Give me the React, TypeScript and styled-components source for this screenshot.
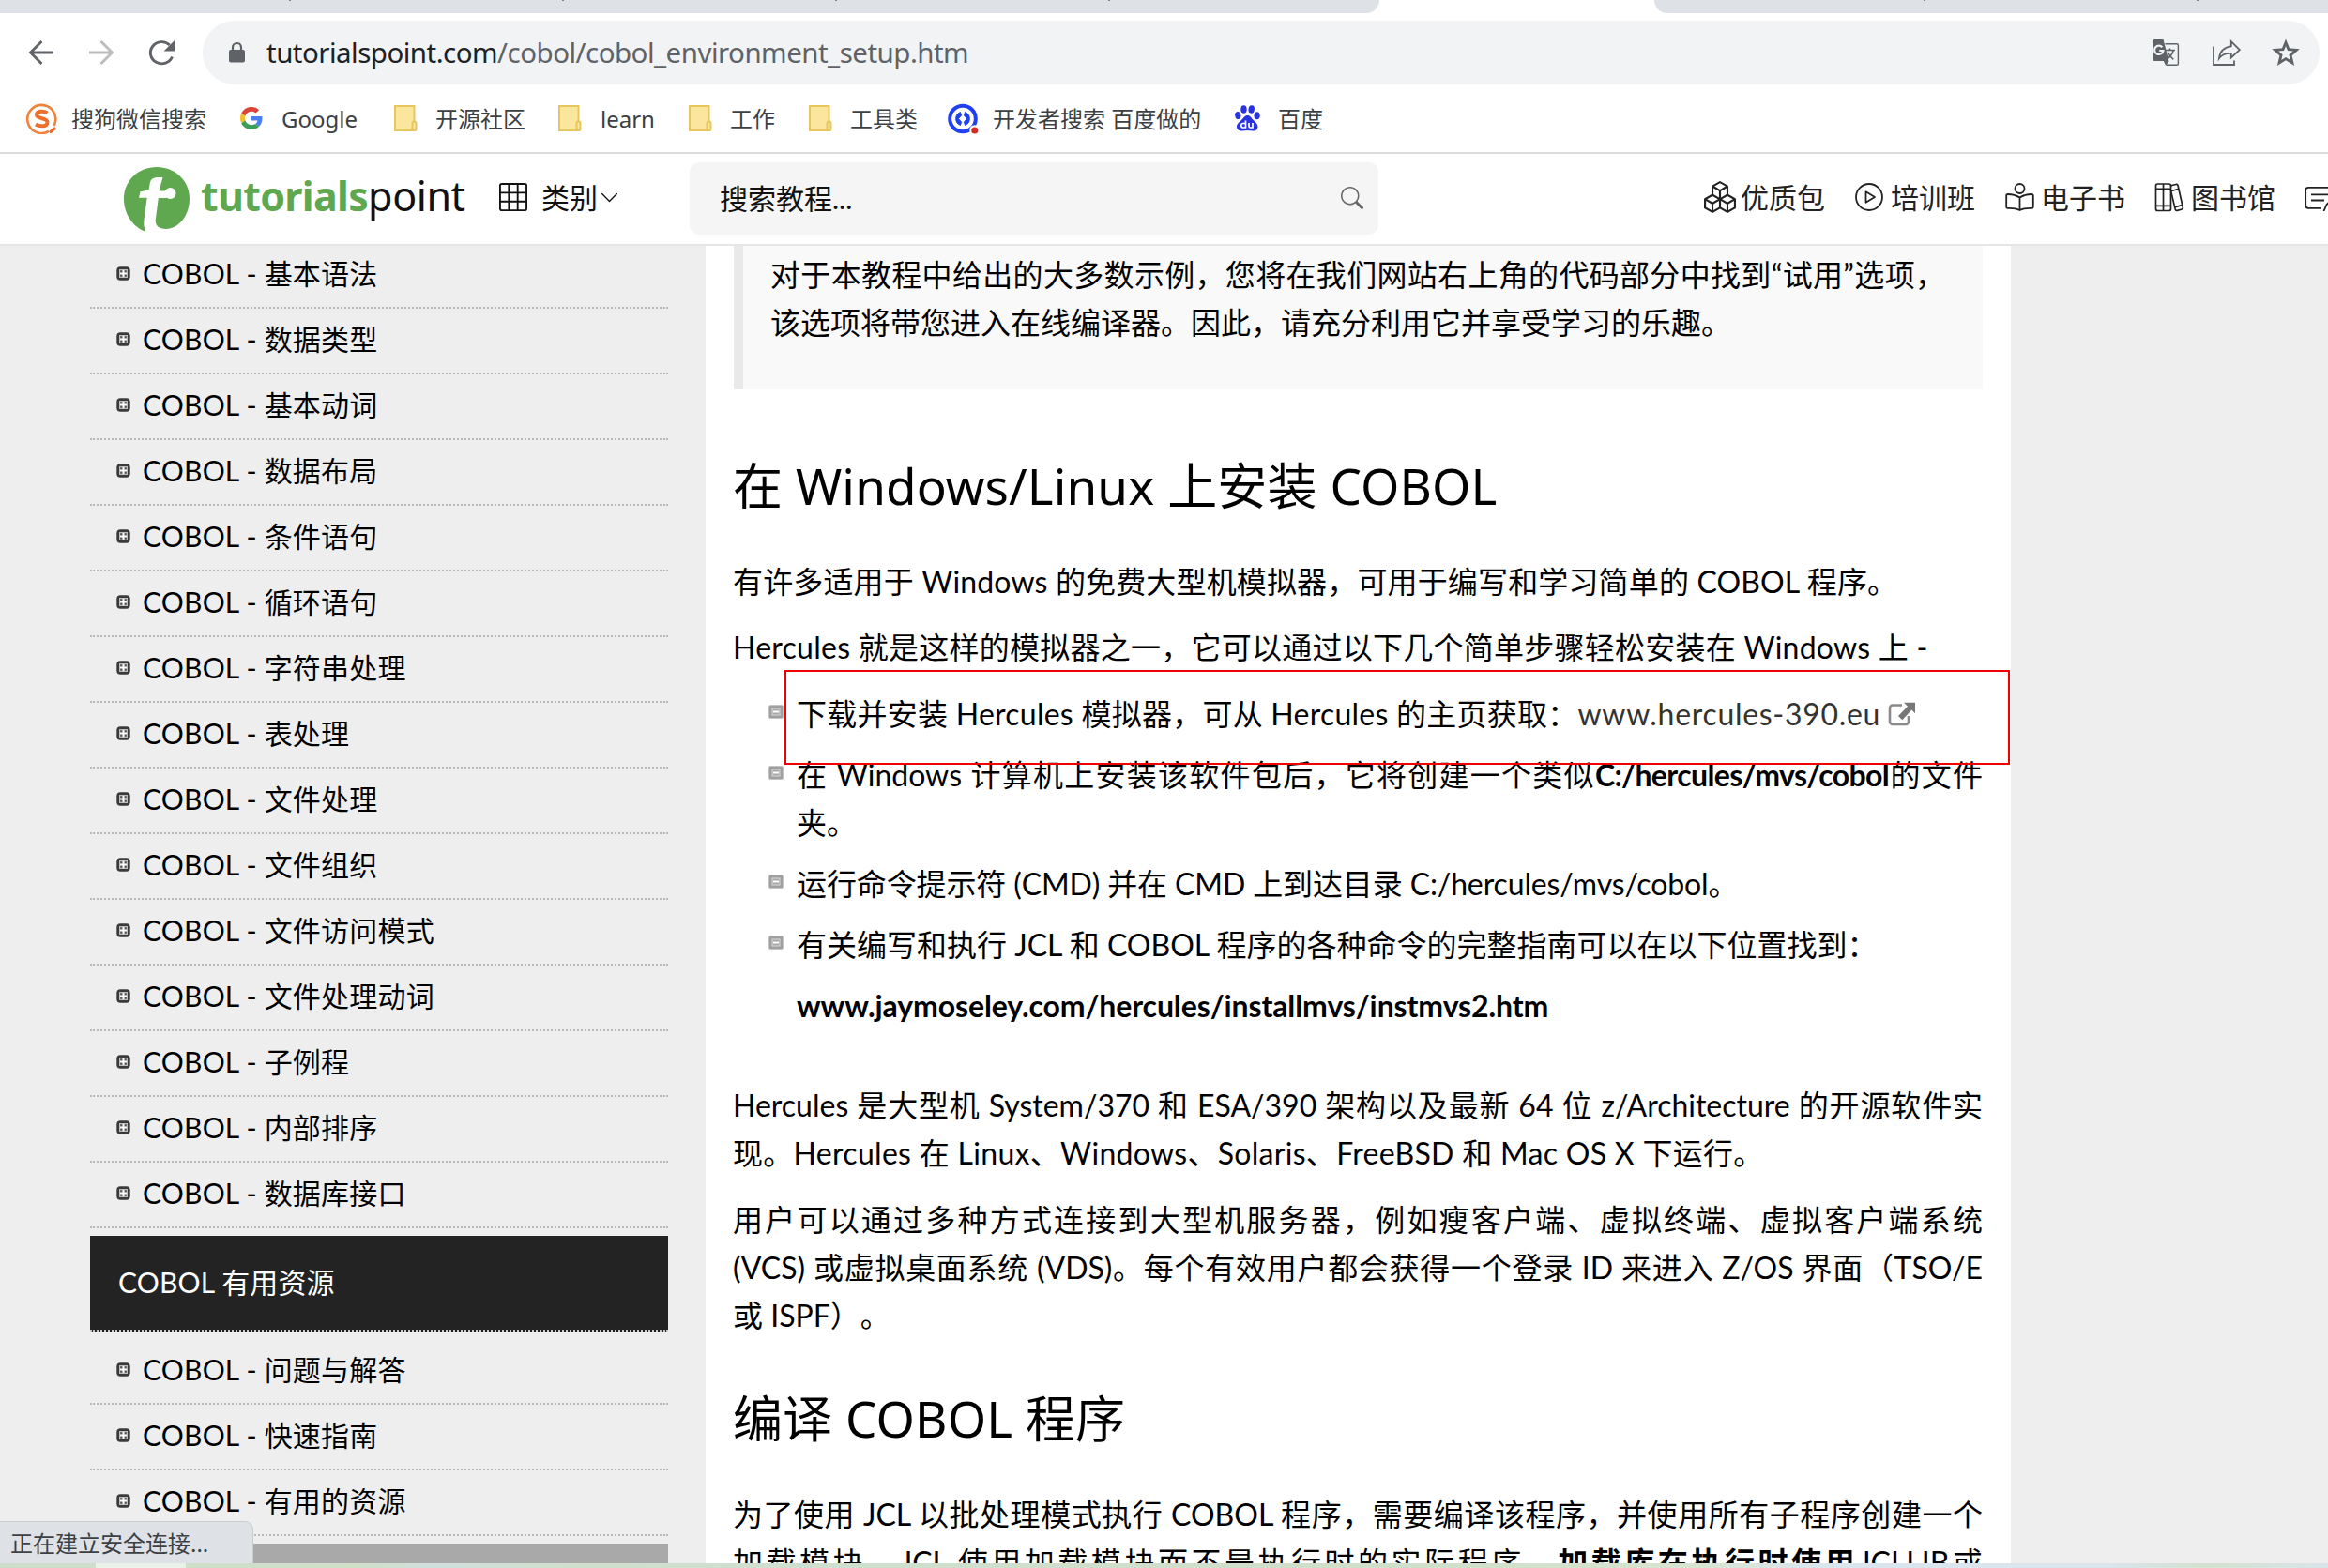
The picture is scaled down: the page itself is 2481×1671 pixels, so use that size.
import React from "react";
import styled, { createGlobalStyle, css } from "styled-components";
import { BsBoxes, BsGrid3X3, BsSearch, BsChevronDown } from "react-icons/bs";

const ui = `"Noto Sans", "Noto Sans CJK SC", sans-serif`;
const body = `Lato, "Noto Sans CJK SC", sans-serif`;

const Global = createGlobalStyle`
  * { box-sizing: border-box; }
  html, body { margin: 0; padding: 0; background: #fff; overflow: hidden; }
  svg { display: block; flex: none; }
`;

const Screen = styled.div`
  position: relative;
  width: 2481px;
  height: 1671px;
  display: flex;
  flex-direction: column;
  overflow: hidden;
  background: #fff;
  font-family: ${body};
  color: #000;
`;

/* ---------- browser chrome ---------- */

const TabStrip = styled.div`
  height: 14px;
  flex: none;
  display: flex;
  justify-content: space-between;
`;

const TabGroup = styled.div<{ $side: "left" | "right" }>`
  width: ${(p) => (p.$side === "left" ? 1470 : 718)}px;
  background: #dee1e6;
  display: flex;
  gap: 289px;
  padding-left: ${(p) => (p.$side === "left" ? 308 : 287)}px;
  ${(p) =>
    p.$side === "left"
      ? css`border-bottom-right-radius: 14px;`
      : css`border-bottom-left-radius: 14px;`}
`;

const TabDivider = styled.i`
  width: 2px;
  height: 1px;
  background: #808488;
`;

const Toolbar = styled.div`
  height: 84px;
  flex: none;
  padding: 8px 9px 8px 28px;
  display: flex;
  align-items: center;
`;

const NavButtons = styled.div`
  width: 188px;
  display: flex;
  gap: 32px;
`;

const Omnibox = styled.div`
  flex: 1;
  height: 68px;
  border-radius: 34px;
  background: #f1f3f4;
  display: flex;
  align-items: center;
  padding: 0 20px 0 26px;
`;

const Url = styled.div`
  margin-left: 21px;
  flex: 1;
  font: 29.5px/40px ${ui};
  letter-spacing: -0.52px;
  color: #5f6368;
  white-space: nowrap;
`;

const UrlHost = styled.span`
  color: #202124;
`;

const OmniActions = styled.div`
  display: flex;
  align-items: center;
  gap: 32px;
`;

const BookmarkBar = styled.div`
  height: 66px;
  flex: none;
  border-bottom: 2px solid #dcdcdd;
  padding: 0 0 8px 28px;
  display: flex;
  align-items: center;
`;

const Bookmark = styled.div<{ $width: number; $gap: number }>`
  width: ${(p) => p.$width}px;
  flex: none;
  display: flex;
  align-items: center;
  gap: ${(p) => p.$gap}px;
  font: 24px/34px ${ui};
  color: #3c4043;
  white-space: nowrap;
`;

const BookmarkLabel = styled.span`
  margin-top: 2px;
`;

/* ---------- site header ---------- */

const SiteHeader = styled.header`
  height: 98px;
  flex: none;
  border-bottom: 2px solid #e6e6e6;
  display: flex;
  align-items: center;
  padding: 0 0 1px 132px;
  overflow: hidden;
  font-size: 30px;
  line-height: 44px;
  white-space: nowrap;
`;

const Logo = styled.div`
  width: 400px;
  flex: none;
  display: flex;
  align-items: center;
  gap: 11px;
`;

const Wordmark = styled.div`
  font: 700 43px/60px ${ui};
  letter-spacing: -0.7px;
  color: #5fa850;
  margin-top: -6px;
`;

const WordmarkLight = styled.span`
  font-weight: 400;
  letter-spacing: -0.4px;
  color: #111;
`;

const Category = styled.div`
  width: 203px;
  flex: none;
  display: flex;
  align-items: center;
  padding-bottom: 3px;
  color: #111;
`;

const CategoryLabel = styled.span`
  margin: 0 2px 0 15px;
`;

const SearchBox = styled.div`
  width: 734px;
  height: 77px;
  flex: none;
  margin-right: 347px;
  border-radius: 10px;
  background: #f5f5f5;
  display: flex;
  align-items: center;
  justify-content: space-between;
  padding: 0 16px 2px 32px;
  color: #111;
`;

const NavLink = styled.a<{ $width: number; $gap: number }>`
  width: ${(p) => p.$width}px;
  flex: none;
  display: flex;
  align-items: center;
  gap: ${(p) => p.$gap}px;
  padding-bottom: 3px;
  color: #222;
`;

/* ---------- page body ---------- */

const Page = styled.div`
  height: 1404px;
  flex: none;
  background: #eee;
  display: flex;
  overflow: hidden;
`;

const Sidebar = styled.nav`
  width: 616px;
  margin: -3px 40px 0 96px;
  flex: none;
  font-size: 30px;
`;

const SideList = styled.ul`
  list-style: none;
  margin: 0;
  padding: 0;
`;

const SideItem = styled.li`
  height: 70px;
  border-bottom: 2px dotted #b8b8b8;
  display: flex;
  align-items: center;
  gap: 13px;
  padding: 0 0 4px 28px;
  letter-spacing: 0.2px;
  white-space: nowrap;
`;

const SideLabel = styled.span`
  margin-top: -3px;
`;

const SideHeading = styled.div`
  height: 102px;
  margin: 8px 0;
  padding: 0 0 5px 30px;
  background: #232323;
  border-bottom: 2px dotted #c8c8c8;
  color: #fff;
  letter-spacing: 0.15px;
  display: flex;
  align-items: center;
`;

const SideBanner = styled.div`
  height: 60px;
  margin-top: 8px;
  background: #a9a9a9;
`;

const Article = styled.main`
  width: 1391px;
  flex: none;
  padding: 0 30px;
  background: #fff;
  font-size: 32px;
  line-height: 51px;
  text-spacing-trim: space-all;
`;

const Quote = styled.blockquote`
  margin: 0;
  height: 153px;
  padding: 5px 40px 0 30px;
  border-left: 10px solid #e9e9e9;
  background: #f9f9f9;
`;

const Heading = styled.h2<{ $top: number }>`
  margin: ${(p) => p.$top}px 0 46px -1px;
  font: 400 53px/60px ${ui};
  letter-spacing: 0.1px;
  white-space: nowrap;
`;

const Paragraph = styled.p<{ $top?: number }>`
  margin: ${(p) => p.$top ?? 0}px 0 0;
`;

const Line = styled.span<{ $fill?: boolean; $ls?: number }>`
  display: block;
  height: 51px;
  margin-left: -1px;
  white-space: nowrap;
  letter-spacing: ${(p) => p.$ls ?? 0}px;
  ${(p) =>
    p.$fill &&
    css`
      text-align: justify;
      text-align-last: justify;
    `}
`;

const Steps = styled.ul`
  list-style: none;
  margin: 20px 0 0;
  padding: 0 0 0 37px;
  display: flex;
  flex-direction: column;
  gap: 14px;
`;

const Step = styled.li`
  display: flex;
  gap: 15px;
`;

const StepMark = styled.span`
  width: 16px;
  flex: none;
  padding-top: 16px;
`;

const StepText = styled.div`
  flex: 1;
`;

const PathName = styled.b`
  letter-spacing: -0.6px;
`;

const Highlight = styled.div`
  position: absolute;
  left: 836px;
  top: 714px;
  width: 1306px;
  height: 101px;
  border: 2px solid #f00000;
`;

const ExternalLink = styled.a`
  display: inline-flex;
  align-items: center;
  gap: 8px;
  color: #333;
  letter-spacing: 0.7px;
`;

const StatusBubble = styled.div`
  position: absolute;
  left: -1px;
  top: 1621px;
  width: 271px;
  height: 45px;
  padding: 6px 0 0 11px;
  border: 1px solid #c9ccd1;
  border-bottom: 0;
  border-top-right-radius: 9px;
  background: #dee1e6;
  color: #3c4043;
  font: 24px/34px ${ui};
  white-space: nowrap;
`;

const DesktopEdge = styled.div`
  height: 5px;
  flex: none;
  padding-left: 102px;
  background: linear-gradient(90deg, #cdddcb 0, #cfdfc8 380px, #cfe0dd 460px, #d0dfcb 620px, #cfdfd0 760px, #d0dfc9 1500px, #d7e4d0 1800px, #dae6ee 1950px, #dae5ec 2250px, #d3e1d0 2350px, #d9e5ea 2481px);
`;

const DesktopEdgeActive = styled.div`
  width: 96px;
  height: 5px;
  background: #eaf1e8;
`;

/* ---------- drawings ---------- */

const BackIcon = ({ flip = false, color = "#5f6368" }: { flip?: boolean; color?: string }) => (
  <svg width="32" height="32" viewBox="0 0 32 32" fill="none" stroke={color} strokeWidth="2.8" transform={flip ? "scale(-1 1)" : undefined}>
    <path d="M29 16H5M16.5 4L4.5 16l12 12" />
  </svg>
);

const ReloadIcon = () => (
  <svg width="32" height="32" viewBox="0 0 32 32">
    <path d="M27.5 20.5A12 11.6 0 1 1 24.8 8" fill="none" stroke="#5f6368" strokeWidth="2.9" />
    <path d="M30 3v11.4H18.6z" fill="#5f6368" />
  </svg>
);

const LockIcon = () => (
  <svg width="21" height="24" viewBox="0 0 21 24">
    <rect x="2" y="9" width="17" height="13.5" rx="2" fill="#5f6368" />
    <path d="M6 10V6.5a4.500 4.500 0 0 1 9 0V10" fill="none" stroke="#5f6368" strokeWidth="2.2" />
  </svg>
);

const TranslateIcon = () => (
  <svg width="32" height="32" viewBox="0 0 32 32">
    <path d="M15.500 6.700H27.800a1.600 1.600 0 0 1 1.600 1.600V27.700a1.600 1.600 0 0 1-1.600 1.600H16.500" fill="none" stroke="#5f6368" strokeWidth="1.400" />
    <path d="M15.500 13.500h10.500M20.500 11.500v2M24.200 13.500c-.8 3.500-3 7-7 9.500M18.300 15.500c1.200 3.200 3.500 6 6 7.800" fill="none" stroke="#5f6368" strokeWidth="1.600" />
    <path d="M4 2h9.500l6 23.500-3.500 4.200L13.800 25H4a2 2 0 0 1-2-2V4a2 2 0 0 1 2-2z" fill="#5f6368" />
    <path d="M12.300 10.200A4.700 4.700 0 1 0 13.400 14H9.200" fill="none" stroke="#f1f3f4" strokeWidth="2.200" />
  </svg>
);

const ShareIcon = () => (
  <svg width="32" height="32" viewBox="0 0 32 32" fill="none" stroke="#5f6368" strokeWidth="1.800">
    <path d="M3 9.500V29h22v-4.500" />
    <path d="M21.800 4.200l9 8.900-9 8.400V17c-6-.3-10 1.400-12.900 5.300.8-7.300 4.800-12 12.900-13z" />
  </svg>
);

const StarIcon = () => (
  <svg width="32" height="32" viewBox="0 0 32 32">
    <path d="M16 5.300l3 7.400 8.200.7-6.200 5.400 1.900 8.100L16 22.600l-6.900 4.300 1.900-8.100-6.200-5.400 8.200-.7z" fill="none" stroke="#5f6368" strokeWidth="2.900" />
  </svg>
);

const SogouIcon = () => (
  <svg width="33" height="33" viewBox="0 0 33 33" fill="none">
    <path d="M24 29.800A15 15 0 1 1 29.500 24" stroke="#f0823a" strokeWidth="2.600" />
    <path d="M26 30.500l4-3.500" stroke="#ee6a2d" strokeWidth="3.200" strokeLinecap="round" />
    <path d="M22.500 10.500c-2-1.300-4-1.800-6.300-1.800-3 0-5.200 1.300-5.200 3.600 0 5 11.500 2.800 11.500 8 0 2.700-2.500 4-5.800 4-2.700 0-4.700-.6-6.700-1.800" stroke="#ee6f2d" strokeWidth="4" />
  </svg>
);

const GoogleIcon = () => (
  <svg width="24" height="24" viewBox="0 0 48 48">
    <path fill="#db4437" d="M24 9.500c3.540 0 6.710 1.220 9.210 3.600l6.850-6.850C35.900 2.380 30.470 0 24 0 14.620 0 6.510 5.380 2.560 13.220l7.980 6.190C12.430 13.720 17.740 9.500 24 9.500z" />
    <path fill="#4b7ff0" d="M46.980 24.550c0-1.570-.15-3.090-.38-4.550H24v9.020h12.940c-.58 2.960-2.260 5.480-4.780 7.180l7.730 6c4.510-4.180 7.090-10.360 7.090-17.650z" />
    <path fill="#f4bd2a" d="M10.530 28.590c-.48-1.450-.76-2.990-.76-4.590s.27-3.140.76-4.590l-7.980-6.190C.92 16.460 0 20.120 0 24c0 3.880.92 7.540 2.560 10.780l7.970-6.190z" />
    <path fill="#3a9d58" d="M24 48c6.480 0 11.930-2.130 15.890-5.810l-7.730-6c-2.150 1.450-4.920 2.300-8.160 2.300-6.260 0-11.570-4.220-13.470-9.910l-7.980 6.190C6.510 42.620 14.620 48 24 48z" />
  </svg>
);

const FolderIcon = () => (
  <svg width="25" height="28" viewBox="0 0 25 28" fill="#fbe69e" stroke="#e7c65c" strokeWidth="2">
    <path d="M1 1h20.500v26H1z" />
    <path d="M19.500 27v-7.500a1.500 1.500 0 0 1 4 0V26a1 1 0 0 1-1 1z" />
  </svg>
);

const DevSearchIcon = () => (
  <svg width="33" height="33" viewBox="0 0 33 33">
    <circle cx="16" cy="16.500" r="13.800" fill="none" stroke="#2140f0" strokeWidth="4" />
    <path d="M13.500 9.500a7.500 7.500 0 0 0 0 14l1-3.500-3-3.500 3-3.500zM18.500 9.500a7.500 7.500 0 0 1 0 14l-1-3.500 3-3.500-3-3.500z" fill="#2140f0" stroke="#2140f0" strokeWidth="1" />
    <circle cx="28.500" cy="28.500" r="5.200" fill="#fff" />
    <circle cx="28.800" cy="29" r="3.600" fill="#d62b20" />
  </svg>
);

const BaiduIcon = () => (
  <svg width="27" height="28" viewBox="0 0 27 28" fill="#2932e1">
    <ellipse cx="9.500" cy="4.500" rx="3.200" ry="4.300" />
    <ellipse cx="17.700" cy="4.500" rx="3.200" ry="4.300" transform="rotate(8 17.700 4.500)" />
    <ellipse cx="3.300" cy="11" rx="3.100" ry="4" transform="rotate(-12 3.300 11)" />
    <ellipse cx="23.600" cy="11.300" rx="3.100" ry="4" />
    <path d="M13.500 11c3 0 4.200 2.800 6 4.800 2.500 2.500 5 4.200 5 7.200 0 3.400-2.800 4.800-5.500 4.500-2-.2-3.500-.5-5.500-.5s-3.500.4-5.500.5C5 27.700 2 26.500 2 23c0-3 2.700-4.700 5.200-7.200 1.800-2 3.300-4.800 6.300-4.800z" />
    <path d="M11.500 16.500V24H9a2.200 2.200 0 0 1 0-4.500h2.500M15 19v3.500a1.500 1.500 0 0 0 1.500 1.500H19v-5" fill="none" stroke="#fff" strokeWidth="1.700" />
  </svg>
);

const LogoMark = () => (
  <svg width="71" height="70" viewBox="0 0 71 70">
    <path d="M35 1C54.500 1 70 15.500 70 34.500 70 53 58 67 45 67c-7.500 0-12-3.500-11.200-10l3-23H45v-7.500h-7.500L41.500 12h-5.200C29 12.500 28.200 15.500 27.500 20l-1 5.500-9 1.800-1.500 6.500h8.700l-3.200 23c-.5 5-.2 9 1.700 13C10.500 65.500 0 51.500 0 35 0 15.500 15.500 1 35 1z" fill="#5fa850" />
    <circle cx="49.500" cy="29" r="6" fill="#fff" />
  </svg>
);

const PlayIcon = () => (
  <svg width="30" height="30" viewBox="0 0 30 30" fill="none" stroke="#222" strokeWidth="1.800" strokeLinejoin="round">
    <circle cx="15" cy="15" r="14" />
    <path d="M11.500 9.300L21 15l-9.500 5.700z" />
  </svg>
);

const ReaderIcon = () => (
  <svg width="31" height="30" viewBox="0 0 31 30" fill="none" stroke="#222" strokeWidth="1.800" strokeLinejoin="round">
    <circle cx="15.500" cy="6" r="5" />
    <path d="M15.500 15.500C12 13.200 7.500 12 2.800 12a1.600 1.600 0 0 0-1.600 1.600v11.800a1.500 1.500 0 0 0 1.500 1.500c4.800-.2 9.300.2 12.800 2.100 3.500-1.900 8-2.300 12.800-2.100a1.500 1.500 0 0 0 1.500-1.500V13.600a1.600 1.600 0 0 0-1.600-1.600c-4.700 0-9.200 1.200-12.700 3.500zM15.500 15.500V29" />
  </svg>
);

const BooksIcon = () => (
  <svg width="32" height="31" viewBox="0 0 32 31" fill="none" stroke="#222" strokeWidth="1.700" strokeLinejoin="round">
    <path d="M9.500 1H3.500A2 2 0 0 0 1.500 3v24.500a2 2 0 0 0 2 2h6zM9.500 1h6a2 2 0 0 1 2 2v24.500a2 2 0 0 1-2 2h-6" />
    <path d="M1.500 6.300h16M1.500 24.300h16M17.500 4l.3-1.200 5-1.300a1.900 1.900 0 0 1 2.300 1.300L30.300 26a1.600 1.600 0 0 1-1.100 2l-4.800 1.400a1.800 1.800 0 0 1-2.200-1.300L17.500 8M18.500 8.500l7.300-2.200M22 25.800l7.300-2.200" />
  </svg>
);

const CodingIcon = () => (
  <svg width="34" height="30" viewBox="0 0 34 30" fill="none" stroke="#222" strokeWidth="1.800">
    <path d="M34 4.800H4.200A3 3 0 0 0 1.200 7.800v16a3 3 0 0 0 3 3H18M7 12.300h24M7 18.500h14M20.500 30l3-7 9-9" />
  </svg>
);

const SideBullet = () => (
  <svg width="15" height="15" viewBox="0 0 15 15">
    <rect x=".3" y=".3" width="14.400" height="14.400" rx="4" fill="#3a3a3a" />
    <rect x="3" y="3" width="9" height="9" fill="#bdbdbd" />
    <rect x="4.200" y="4.200" width="6.600" height="6.600" fill="#555" />
    <path d="M7.500 4v7M4 7.500h7" stroke="#fff" strokeWidth="2" />
  </svg>
);

const StepBullet = () => (
  <svg width="16" height="15" viewBox="0 0 16 15">
    <rect x=".5" y=".5" width="15" height="14" rx="1.500" fill="#a0a0a0" stroke="#c4c4c4" />
    <rect x="4" y="4" width="8" height="7" fill="#a8a8a8" stroke="#d8d8d8" />
    <path d="M5 7.500h6" stroke="#fff" strokeWidth="2" />
  </svg>
);

const ExternalIcon = () => (
  <svg width="30" height="26" viewBox="0 0 30 26">
    <path d="M15 3.500H5a3 3 0 0 0-3 3V21a3 3 0 0 0 3 3h14a3 3 0 0 0 3-3v-6" fill="none" stroke="#8a8a8a" strokeWidth="2.600" />
    <path d="M17 .8h12v11.500l-3.700-3.700L15.300 19.300l-4.300-4.300L21 4.800z" fill="#777" />
  </svg>
);

/* ---------- content ---------- */

const lessons = [
  "基本语法", "数据类型", "基本动词", "数据布局", "条件语句", "循环语句", "字符串处理", "表处理",
  "文件处理", "文件组织", "文件访问模式", "文件处理动词", "子例程", "内部排序", "数据库接口",
];
const resources = ["问题与解答", "快速指南", "有用的资源"];

const bookmarks = [
  { icon: <SogouIcon />, label: "搜狗微信搜索", width: 228, gap: 15 },
  { icon: <GoogleIcon />, label: "Google", width: 164, gap: 20 },
  { icon: <FolderIcon />, label: "开源社区", width: 175, gap: 19 },
  { icon: <FolderIcon />, label: "learn", width: 139, gap: 20 },
  { icon: <FolderIcon />, label: "工作", width: 128, gap: 19 },
  { icon: <FolderIcon />, label: "工具类", width: 148, gap: 19 },
  { icon: <DevSearchIcon />, label: "开发者搜索 百度做的", width: 306, gap: 15 },
  { icon: <BaiduIcon />, label: "百度", width: 110, gap: 19 },
];

const links = [
  { icon: <BsBoxes size={34} />, label: "优质包", width: 161, gap: 5 },
  { icon: <PlayIcon />, label: "培训班", width: 160, gap: 8 },
  { icon: <ReaderIcon />, label: "电子书", width: 159, gap: 7 },
  { icon: <BooksIcon />, label: "图书馆", width: 160, gap: 7 },
  { icon: <CodingIcon />, label: "", width: 34, gap: 0 },
];

const SideLinks = ({ items }: { items: string[] }) => (
  <SideList>
    {items.map((t) => (
      <SideItem key={t}>
        <SideBullet />
        <SideLabel>COBOL - {t}</SideLabel>
      </SideItem>
    ))}
  </SideList>
);

const StepRow = ({ children }: { children: React.ReactNode }) => (
  <Step>
    <StepMark>
      <StepBullet />
    </StepMark>
    <StepText>{children}</StepText>
  </Step>
);

export default function App() {
  return (
    <Screen lang="zh-CN">
      <Global />
      <TabStrip>
        <TabGroup $side="left">
          <TabDivider />
          <TabDivider />
          <TabDivider />
          <TabDivider />
        </TabGroup>
        <TabGroup $side="right">
          <TabDivider />
          <TabDivider />
        </TabGroup>
      </TabStrip>

      <Toolbar>
        <NavButtons>
          <BackIcon />
          <BackIcon flip color="#babcbe" />
          <ReloadIcon />
        </NavButtons>
        <Omnibox>
          <LockIcon />
          <Url>
            <UrlHost>tutorialspoint.com</UrlHost>/cobol/cobol_environment_setup.htm
          </Url>
          <OmniActions>
            <TranslateIcon />
            <ShareIcon />
            <StarIcon />
          </OmniActions>
        </Omnibox>
      </Toolbar>

      <BookmarkBar>
        {bookmarks.map((b) => (
          <Bookmark key={b.label} $width={b.width} $gap={b.gap}>
            {b.icon}
            <BookmarkLabel>{b.label}</BookmarkLabel>
          </Bookmark>
        ))}
      </BookmarkBar>

      <SiteHeader>
        <Logo>
          <LogoMark />
          <Wordmark>
            tutorials<WordmarkLight>point</WordmarkLight>
          </Wordmark>
        </Logo>
        <Category>
          <BsGrid3X3 size={30} />
          <CategoryLabel>类别</CategoryLabel>
          <BsChevronDown size={21} />
        </Category>
        <SearchBox>
          搜索教程...
          <BsSearch size={24} color="#666" />
        </SearchBox>
        {links.map((l) => (
          <NavLink key={l.label} $width={l.width} $gap={l.gap}>
            {l.icon}
            {l.label}
          </NavLink>
        ))}
      </SiteHeader>

      <Page>
        <Sidebar>
          <SideLinks items={lessons} />
          <SideHeading>COBOL 有用资源</SideHeading>
          <SideLinks items={resources} />
          <SideBanner />
        </Sidebar>

        <Article>
          <Quote>
            <Line $fill>对于本教程中给出的大多数示例，您将在我们网站右上角的代码部分中找到“试用”选项，</Line>
            <Line>该选项将带您进入在线编译器。因此，请充分利用它并享受学习的乐趣。</Line>
          </Quote>

          <Heading $top={73}>在 Windows/Linux 上安装 COBOL</Heading>
          <Paragraph>
            <Line $ls={0.15}>有许多适用于 Windows 的免费大型机模拟器，可用于编写和学习简单的 COBOL 程序。</Line>
          </Paragraph>
          <Paragraph $top={19}>
            <Line $ls={0.25}>Hercules 就是这样的模拟器之一，它可以通过以下几个简单步骤轻松安装在 Windows 上 -</Line>
          </Paragraph>

          <Steps>
            <StepRow>
              <Line $ls={0.25}>
                下载并安装 Hercules 模拟器，可从 Hercules 的主页获取：
                <ExternalLink>
                  www.hercules-390.eu
                  <ExternalIcon />
                </ExternalLink>
              </Line>
            </StepRow>
            <StepRow>
              <Line $fill>
                在 Windows 计算机上安装该软件包后，它将创建一个类似<PathName>C:/hercules/mvs/cobol</PathName>的文件
              </Line>
              <Line>夹。</Line>
            </StepRow>
            <StepRow>
              <Line $ls={-0.12}>运行命令提示符 (CMD) 并在 CMD 上到达目录 C:/hercules/mvs/cobol。</Line>
            </StepRow>
            <StepRow>
              <Line>有关编写和执行 JCL 和 COBOL 程序的各种命令的完整指南可以在以下位置找到：</Line>
              <Paragraph $top={14}>
                <Line $ls={-0.1}>
                  <b>www.jaymoseley.com/hercules/installmvs/instmvs2.htm</b>
                </Line>
              </Paragraph>
            </StepRow>
          </Steps>

          <Paragraph $top={55}>
            <Line $fill>Hercules 是大型机 System/370 和 ESA/390 架构以及最新 64 位 z/Architecture 的开源软件实</Line>
            <Line $ls={0.3}>现。Hercules 在 Linux、Windows、Solaris、FreeBSD 和 Mac OS X 下运行。</Line>
          </Paragraph>
          <Paragraph $top={20}>
            <Line $fill>用户可以通过多种方式连接到大型机服务器，例如瘦客户端、虚拟终端、虚拟客户端系统</Line>
            <Line $fill>(VCS) 或虚拟桌面系统 (VDS)。每个有效用户都会获得一个登录 ID 来进入 Z/OS 界面（TSO/E</Line>
            <Line>或 ISPF）。</Line>
          </Paragraph>

          <Heading $top={55}>编译 COBOL 程序</Heading>
          <Paragraph>
            <Line $fill>为了使用 JCL 以批处理模式执行 COBOL 程序，需要编译该程序，并使用所有子程序创建一个</Line>
            <Line $fill>
              加载模块。JCL 使用加载模块而不是执行时的实际程序。<b>加载库在执行时使用</b>JCLLIB或
            </Line>
          </Paragraph>
        </Article>
      </Page>

      <DesktopEdge>
        <DesktopEdgeActive />
      </DesktopEdge>

      <Highlight />
      <StatusBubble>正在建立安全连接...</StatusBubble>
    </Screen>
  );
}
